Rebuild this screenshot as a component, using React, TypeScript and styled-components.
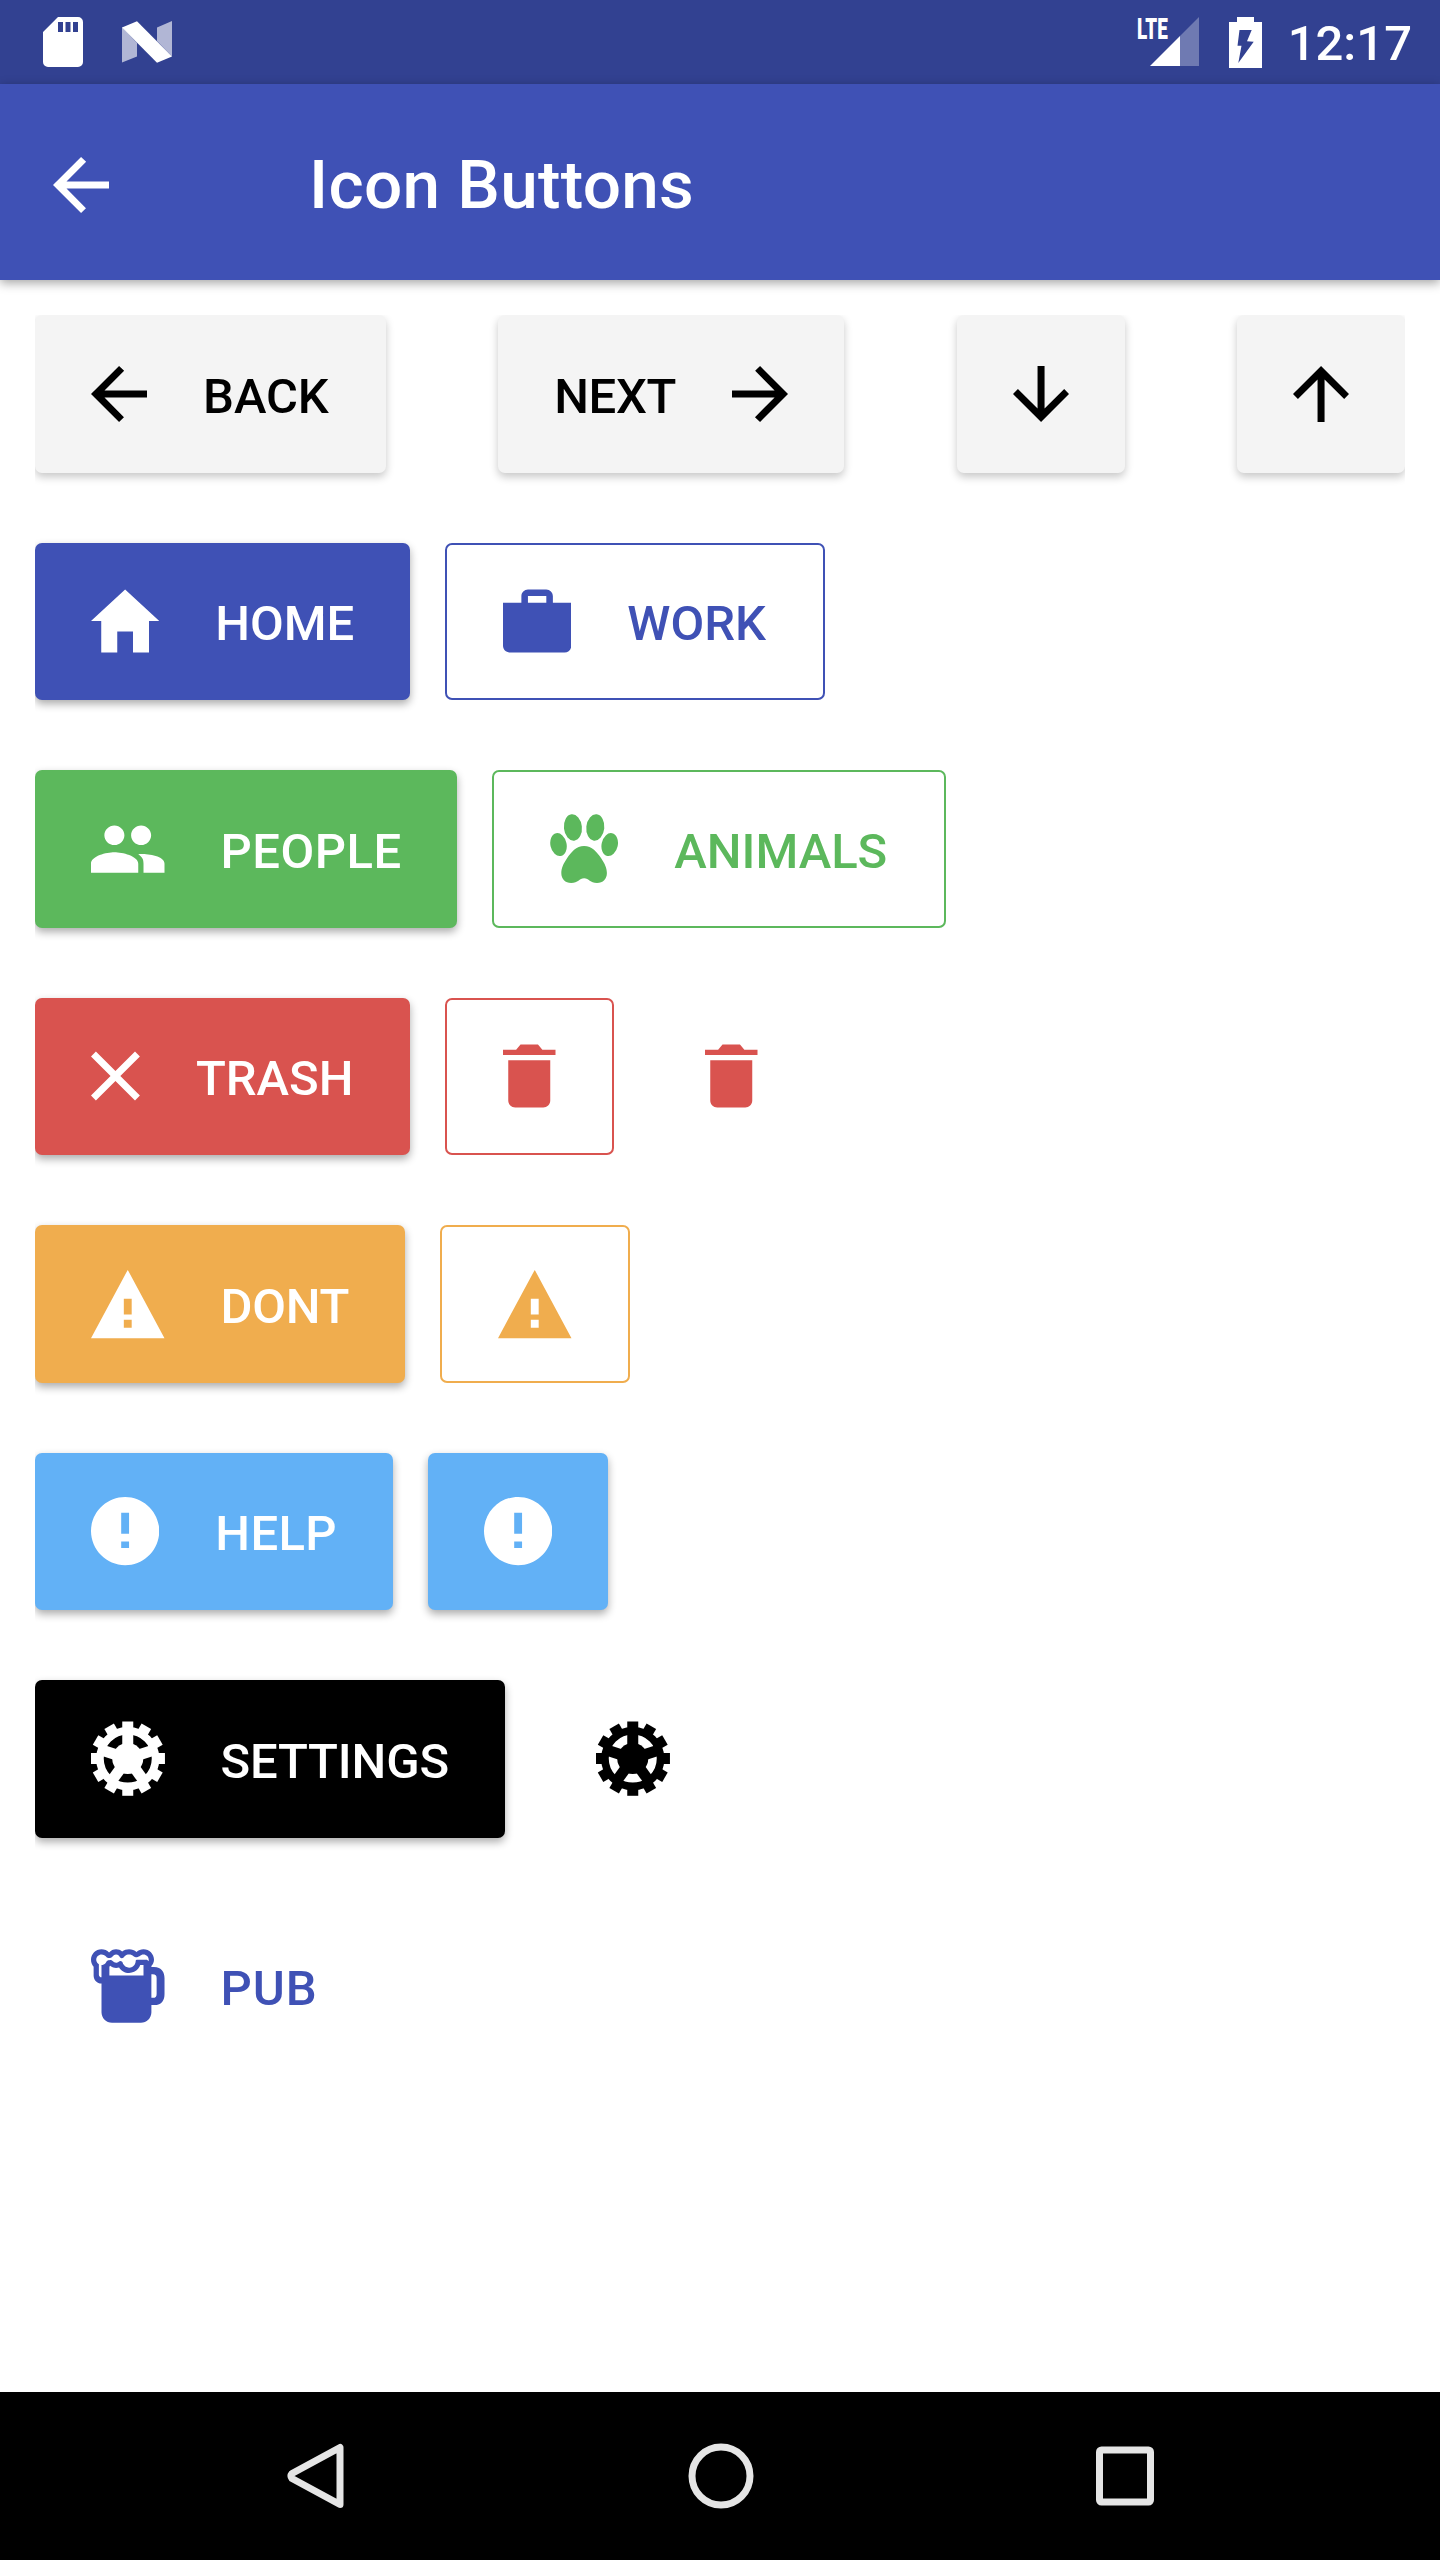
import React from "react";
import styled, { createGlobalStyle, css } from "styled-components";
import {
  IoMdArrowBack,
  IoMdArrowForward,
  IoMdArrowDown,
  IoMdArrowUp,
  IoMdHome,
  IoMdBriefcase,
  IoMdPeople,
  IoMdClose,
  IoMdTrash,
  IoMdWarning,
  IoMdAlert,
  IoMdBeer,
} from "react-icons/io";

const GlobalStyle = createGlobalStyle`
  * { box-sizing: border-box; }
  body { margin: 0; background: #fff; }
`;

const palette = {
  primary: "#3f51b5",
  success: "#5cb85c",
  danger: "#d9534f",
  warning: "#f0ad4e",
  info: "#62b1f6",
  dark: "#000000",
  light: "#f4f4f4",
};

type Tone = keyof typeof palette;
type Variant = "solid" | "bordered" | "transparent";

const Screen = styled.div`
  display: flex;
  flex-direction: column;
  width: 1440px;
  height: 2560px;
  overflow: hidden;
  background: #fff;
  font-family: Roboto, "Noto Sans", sans-serif;
`;

const StatusBar = styled.div`
  display: flex;
  justify-content: space-between;
  height: 84px;
  padding: 0 28px 0 43px;
  background: #324191;
  color: #fff;
`;

const StatusGroup = styled.div<{ $gap: number }>`
  display: flex;
  align-items: center;
  gap: ${(p) => p.$gap}px;
`;

const Signal = styled.div`
  position: relative;
  width: 61px;
  height: 50px;
`;

const NetworkLabel = styled.span`
  position: absolute;
  left: -1px;
  top: -2px;
  font-size: 29.5px;
  line-height: 29px;
  font-weight: 900;
  transform: scaleX(0.64);
  transform-origin: left;
`;

const Clock = styled.span`
  margin-left: -4px;
  padding-top: 4px;
  font-size: 49px;
  line-height: 56px;
  font-weight: 500;
`;

const Header = styled.header`
  display: flex;
  align-items: center;
  flex-shrink: 0;
  height: 196px;
  padding: 6px 0 0 53px;
  background: ${palette.primary};
  color: #fff;
  box-shadow: 0 3px 10px rgba(0, 0, 0, 0.36);
`;

const Title = styled.h1`
  margin: 0 0 0 200px;
  font-size: 67.5px;
  line-height: 80px;
  font-weight: 500;
  letter-spacing: 0.25px;
`;

const Content = styled.main`
  display: flex;
  flex-direction: column;
  gap: 70px;
  flex: 1;
  padding: 35px;
`;

const Row = styled.div<{ $spread?: boolean }>`
  display: flex;
  gap: 35px;
  height: 157.5px;
  clip-path: inset(${(p) => (p.$spread ? "0" : "-20px")} 0 -20px 0);
  ${(p) => p.$spread && "justify-content: space-between;"}
`;

const variants = {
  solid: (tone: Tone) => css`
    background: ${palette[tone]};
    color: ${tone === "light" ? "#000" : "#fff"};
    box-shadow: 0 4px 8px rgba(0, 0, 0, ${tone === "light" ? 0.22 : 0.33});
  `,
  bordered: (tone: Tone) => css`
    background: transparent;
    color: ${palette[tone]};
    border: 2px solid ${palette[tone]};
  `,
  transparent: (tone: Tone) => css`
    background: transparent;
    color: ${palette[tone]};
  `,
};

const Button = styled.button<{ $tone: Tone; $variant: Variant; $width?: number }>`
  display: flex;
  align-items: center;
  gap: 56px;
  flex-shrink: 0;
  width: ${(p) => (p.$width ? `${p.$width}px` : "auto")};
  height: 157.5px;
  padding: 0 0 0 56px;
  padding-right: ${(p) => (p.$width ? 0 : 56)}px;
  border: 0;
  border-radius: 7px;
  font-family: inherit;
  ${(p) => variants[p.$variant](p.$tone)}
`;

const Label = styled.span<{ $tracking: number }>`
  padding-top: 5.6px;
  font-size: 49px;
  line-height: 58px;
  font-weight: 500;
  letter-spacing: ${(p) => p.$tracking}px;
  text-transform: uppercase;
  white-space: nowrap;
`;

const Glyph = styled.span<{ $width: number }>`
  display: block;
  flex-shrink: 0;
  width: ${(p) => p.$width}px;
  height: 84px;

  svg {
    display: block;
    width: 100%;
    height: 100%;
  }
`;

const NavBar = styled.nav`
  display: flex;
  align-items: center;
  justify-content: space-between;
  flex-shrink: 0;
  height: 168px;
  padding: 0 286px 0 287px;
  background: #000;
`;

const ICON_UNITS = 512;
const ICON_SIZE = 84;
const UNIT = ICON_UNITS / ICON_SIZE;

type ShapeProps = { viewBox?: string };

const COG_TEETH = Array.from({ length: 12 }, (_, i) => i * 30);
const COG_SPOKES = Array.from({ length: 5 }, (_, i) => i * 72);

function CogShape({ viewBox }: ShapeProps) {
  return (
    <svg viewBox={viewBox}>
      <g transform={`translate(256 253.500) scale(${UNIT})`} stroke="currentColor" strokeWidth="11">
        <circle r="27.800" fill="none" strokeWidth="7.600" />
        <circle r="15.500" fill="currentColor" stroke="none" />
        {COG_SPOKES.map((a) => (
          <path key={`s${a}`} d="M0 0V-26" transform={`rotate(${a})`} />
        ))}
        {COG_TEETH.map((a) => (
          <path key={`t${a}`} d="M0 -28V-37.200" transform={`rotate(${a})`} />
        ))}
      </g>
    </svg>
  );
}

function PawShape({ viewBox }: ShapeProps) {
  return (
    <svg viewBox={viewBox} fill="currentColor">
      <g transform={`translate(48 0) scale(${UNIT})`}>
        <ellipse cx="22.900" cy="20.500" rx="9" ry="13.200" transform="rotate(-6 22.900 20.500)" />
        <ellipse cx="45.300" cy="20.500" rx="9" ry="13.200" transform="rotate(6 45.300 20.500)" />
        <ellipse cx="8.500" cy="37.600" rx="8.100" ry="11.600" transform="rotate(-12 8.500 37.600)" />
        <ellipse cx="59.700" cy="37.600" rx="8.100" ry="11.600" transform="rotate(12 59.700 37.600)" />
        <path d="M34.100 38.900C42 38.900 47 45 51 51C55 57 56.900 61 56.900 66C56.900 72 53 76 47 76C40 76 39 71.200 34.100 71.200C29.200 71.200 28.200 76 21.200 76C15.200 76 11.300 72 11.300 66C11.300 61 13.200 57 17.200 51C21.200 45 26.200 38.900 34.100 38.900Z" />
      </g>
    </svg>
  );
}

const icons = {
  back: { Shape: IoMdArrowBack, units: 342 },
  next: { Shape: IoMdArrowForward, units: 342 },
  down: { Shape: IoMdArrowDown, units: 342 },
  up: { Shape: IoMdArrowUp, units: 342 },
  home: { Shape: IoMdHome, units: 416 },
  work: { Shape: IoMdBriefcase, units: 416 },
  people: { Shape: IoMdPeople, units: 448 },
  paw: { Shape: PawShape, units: 416 },
  close: { Shape: IoMdClose, units: 298 },
  trash: { Shape: IoMdTrash, units: 320 },
  warning: { Shape: IoMdWarning, units: 448 },
  alert: { Shape: IoMdAlert, units: 416 },
  cog: { Shape: CogShape, units: 448 },
  beer: { Shape: IoMdBeer, units: 448 },
};

type IconName = keyof typeof icons;

/* Trims the side bearings so the padding is measured from the drawn shape. */
function Icon({ name }: { name: IconName }) {
  const { Shape, units } = icons[name];
  return (
    <Glyph $width={units / UNIT}>
      <Shape viewBox={`${(ICON_UNITS - units) / 2} 0 ${units} ${ICON_UNITS}`} />
    </Glyph>
  );
}

interface ButtonSpec {
  icon: IconName;
  label?: string;
  tone: Tone;
  variant?: Variant;
  iconRight?: boolean;
  width?: number;
  tracking?: number;
}

function IconButton({ icon, label, tone, variant = "solid", iconRight, width, tracking = 0 }: ButtonSpec) {
  return (
    <Button $tone={tone} $variant={variant} $width={width}>
      {!iconRight && <Icon name={icon} />}
      {label && <Label $tracking={tracking}>{label}</Label>}
      {iconRight && <Icon name={icon} />}
    </Button>
  );
}

const rows: ButtonSpec[][] = [
  [
    { icon: "back", label: "Back", tone: "light", width: 351, tracking: -0.1 },
    { icon: "next", label: "Next", tone: "light", iconRight: true, width: 346, tracking: -0.4 },
    { icon: "down", tone: "light" },
    { icon: "up", tone: "light" },
  ],
  [
    { icon: "home", label: "Home", tone: "primary", width: 375 },
    { icon: "work", label: "Work", tone: "primary", variant: "bordered", width: 380 },
  ],
  [
    { icon: "people", label: "People", tone: "success", width: 422, tracking: 0.5 },
    { icon: "paw", label: "Animals", tone: "success", variant: "bordered", width: 454 },
  ],
  [
    { icon: "close", label: "Trash", tone: "danger", width: 375 },
    { icon: "trash", tone: "danger", variant: "bordered", width: 169 },
    { icon: "trash", tone: "danger", variant: "transparent" },
  ],
  [
    { icon: "warning", label: "Dont", tone: "warning", width: 370, tracking: -0.3 },
    { icon: "warning", tone: "warning", variant: "bordered", width: 190 },
  ],
  [
    { icon: "alert", label: "Help", tone: "info", width: 358, tracking: 0.4 },
    { icon: "alert", tone: "info" },
  ],
  [
    { icon: "cog", label: "Settings", tone: "dark", width: 470, tracking: -0.15 },
    { icon: "cog", tone: "dark", variant: "transparent" },
  ],
  [{ icon: "beer", label: "Pub", tone: "primary", variant: "transparent", tracking: 1 }],
];

function SdCardIcon() {
  return (
    <svg width="40" height="50" viewBox="0 0 40 50">
      <path
        fill="#fff"
        fillRule="evenodd"
        d="M15 0H35a5 5 0 0 1 5 5V45a5 5 0 0 1-5 5H5a5 5 0 0 1-5-5V15ZM15 5v10h5V5ZM22.5 5v10h5V5ZM30 5v10h5V5Z"
      />
    </svg>
  );
}

function NougatIcon() {
  return (
    <svg width="50" height="42" viewBox="0 0 50 42">
      <path fill="#fff" fillOpacity="0.62" d="M0 6L15 22V35.500L0 41.500ZM35 6.500L50 0V35.500L35 20Z" />
      <path fill="#fff" d="M0 6.500L15 0.200L50 35.500L35 41.800Z" />
    </svg>
  );
}

function BatteryIcon() {
  return (
    <svg width="33" height="51" viewBox="0 0 33 51">
      <path
        fill="#fff"
        fillRule="evenodd"
        d="M8 0H25V5H33V51H0V5H8ZM10.500 13L8.500 28.700H12.500L9.300 46L24.700 24.700L18 24.300L22.700 13Z"
      />
    </svg>
  );
}

export default function App() {
  return (
    <>
      <GlobalStyle />
      <Screen>
        <StatusBar>
          <StatusGroup $gap={39}>
            <SdCardIcon />
            <NougatIcon />
          </StatusGroup>
          <StatusGroup $gap={30}>
            <Signal>
              <svg width="61" height="50" viewBox="0 0 61 50">
                <path fill="#fff" fillOpacity="0.3" d="M61 0V49H42V19Z" />
                <path fill="#fff" d="M42 19V49H12Z" />
              </svg>
              <NetworkLabel>LTE</NetworkLabel>
            </Signal>
            <BatteryIcon />
            <Clock>12:17</Clock>
          </StatusGroup>
        </StatusBar>
        <Header>
          <Icon name="back" />
          <Title>Icon Buttons</Title>
        </Header>
        <Content>
          {rows.map((row, i) => (
            <Row key={i} $spread={i === 0}>
              {row.map((spec, j) => (
                <IconButton key={j} {...spec} />
              ))}
            </Row>
          ))}
        </Content>
        <NavBar>
          <svg width="58" height="66" viewBox="0 0 58 66" fill="none" stroke="#e5e5e5" strokeWidth="7" strokeLinejoin="round">
            <path d="M53 4.500V61.500L5 35.500Q3 33 5 30.500Z" />
          </svg>
          <svg width="66" height="66" viewBox="0 0 66 66" fill="none" stroke="#e5e5e5" strokeWidth="7">
            <circle cx="33" cy="33" r="29" />
          </svg>
          <svg width="58" height="60" viewBox="0 0 58 60" fill="none" stroke="#e5e5e5" strokeWidth="7">
            <rect x="3.500" y="4" width="51" height="52" rx="2" />
          </svg>
        </NavBar>
      </Screen>
    </>
  );
}
